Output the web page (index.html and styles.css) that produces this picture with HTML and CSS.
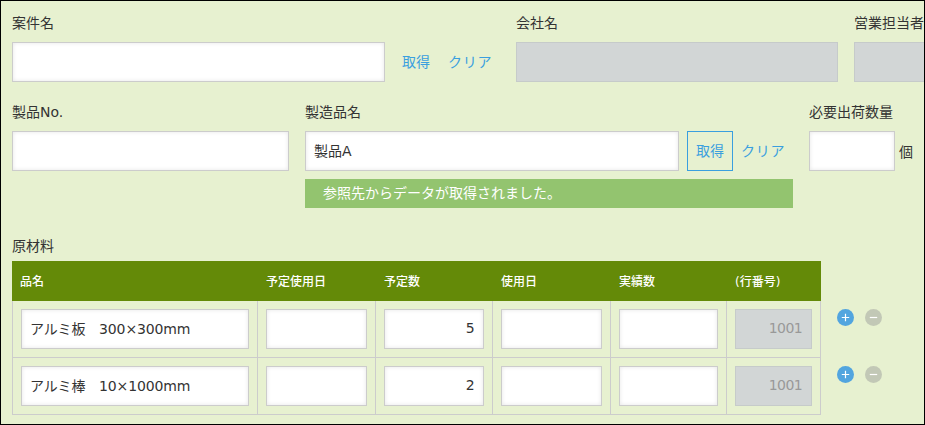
FILE: index.html
```
<!DOCTYPE html>
<html lang="ja">
<head>
<meta charset="utf-8">
<title>製品</title>
<link rel="stylesheet" href="styles.css">
</head>
<body>
<main class="frame">
  <div class="row row-top">
    <div class="field w-373">
      <label class="label">案件名</label>
      <input class="input" type="text">
    </div>
    <div class="links links-top">
      <a class="link get-plain">取得</a>
      <a class="link clear">クリア</a>
    </div>
    <div class="field w-322 after-links">
      <label class="label">会社名</label>
      <input class="input is-off" type="text" disabled>
    </div>
    <div class="field w-322 next-16">
      <label class="label">営業担当者</label>
      <input class="input is-off" type="text" disabled>
    </div>
  </div>

  <div class="row row-second">
    <div class="field w-277">
      <label class="label">製品No.</label>
      <input class="input" type="text">
    </div>
    <div class="product next-16">
      <div class="product-main">
        <div class="field w-374">
          <label class="label">製造品名</label>
          <input class="input" type="text" value="製品A">
        </div>
        <div class="links links-second">
          <a class="link get-boxed">取得</a>
          <a class="link clear">クリア</a>
        </div>
      </div>
      <div class="message">参照先からデータが取得されました。</div>
    </div>
    <div class="field qty">
      <label class="label">必要出荷数量</label>
      <div class="qty-line">
        <input class="input w-86" type="text">
        <span class="unit">個</span>
      </div>
    </div>
  </div>

  <div class="materials">
    <div class="label">原材料</div>
    <div class="table-line">
      <table class="table">
        <thead>
          <tr>
            <th class="c-name">品名</th>
            <th class="c-date">予定使用日</th>
            <th class="c-plan">予定数</th>
            <th class="c-used">使用日</th>
            <th class="c-real">実績数</th>
            <th class="c-line">(行番号)</th>
          </tr>
        </thead>
        <tbody>
          <tr>
            <td><input class="input name" type="text" value="アルミ板　300×300mm"></td>
            <td><input class="input" type="text"></td>
            <td><input class="input num" type="text" value="5"></td>
            <td><input class="input" type="text"></td>
            <td><input class="input" type="text"></td>
            <td><input class="input num is-off" type="text" value="1001" disabled></td>
          </tr>
          <tr>
            <td><input class="input name" type="text" value="アルミ棒　10×1000mm"></td>
            <td><input class="input" type="text"></td>
            <td><input class="input num" type="text" value="2"></td>
            <td><input class="input" type="text"></td>
            <td><input class="input" type="text"></td>
            <td><input class="input num is-off" type="text" value="1001" disabled></td>
          </tr>
        </tbody>
      </table>
      <div class="actions">
        <div class="action-row">
          <svg class="round" viewBox="0 0 17 17"><circle class="add" cx="8.5" cy="8.5" r="8.5"/><path class="sign" d="M8.5 4.8v7.4M4.8 8.5h7.4"/></svg>
          <svg class="round" viewBox="0 0 17 17"><circle class="del" cx="8.5" cy="8.5" r="8.5"/><path class="sign" d="M4.8 8.5h7.4"/></svg>
        </div>
        <div class="action-row">
          <svg class="round" viewBox="0 0 17 17"><circle class="add" cx="8.5" cy="8.5" r="8.5"/><path class="sign" d="M8.5 4.8v7.4M4.8 8.5h7.4"/></svg>
          <svg class="round" viewBox="0 0 17 17"><circle class="del" cx="8.5" cy="8.5" r="8.5"/><path class="sign" d="M4.8 8.5h7.4"/></svg>
        </div>
      </div>
    </div>
  </div>
</main>
</body>
</html>
```
FILE: styles.css
```
* { box-sizing: border-box; }
html, body { margin: 0; padding: 0; }
body {
  width: 925px;
  height: 425px;
  overflow: hidden;
  font-family: "DejaVu Sans", "Noto Sans CJK JP", sans-serif;
  font-size: 14px;
  color: #333;
}
.frame {
  width: 925px;
  height: 425px;
  overflow: hidden;
  border: 1px solid #000;
  background: #e7f1d0;
  padding: 12px 0 0 11px;
}
.row { display: flex; align-items: flex-start; }
.row-top { width: 1200px; }
.row-second { margin-top: 20px; }
.field { display: flex; flex-direction: column; flex: none; }
.label { display: block; height: 20px; line-height: 20px; margin-bottom: 9px; }
.input {
  display: block;
  width: 100%;
  height: 40px;
  margin: 0;
  padding: 0 8px 2px;
  border: 1px solid #ccc;
  border-radius: 0;
  background: #fff;
  box-shadow: inset 0 0 4px rgba(0, 0, 0, .1);
  font: inherit;
  color: #333;
  outline: none;
}
.is-off { background: #d2d6d6; border-color: #c6cbca; box-shadow: none; color: #999; }
.name { letter-spacing: -.15px; }
.num { text-align: right; padding-right: 9px; letter-spacing: -.6px; }
.w-373 { width: 373px; }
.w-322 { width: 322px; }
.w-277 { width: 277px; }
.w-374 { width: 374px; }
.w-86 { width: 86px; flex: none; }
.next-16 { margin-left: 16px; }
.links { display: flex; align-items: center; flex: none; height: 40px; }
.link { color: #3a9fdf; line-height: 20px; }
.clear { letter-spacing: .7px; }
.links-top { margin: 29px 0 0 17px; gap: 18px; }
.after-links { margin-left: 24px; }
.links-second { margin: 29px 0 0 8px; gap: 8px; }
.get-boxed {
  display: flex;
  align-items: center;
  justify-content: center;
  width: 46px;
  height: 40px;
  border: 1px solid #3a9fdf;
}
.product { flex: none; width: 488px; }
.product-main { display: flex; }
.message {
  margin-top: 8px;
  height: 29px;
  line-height: 28px;
  padding-left: 18px;
  background: #93c46f;
  color: #fff;
}
.qty { margin-left: 16px; }
.qty-line { display: flex; align-items: center; gap: 4px; }
.unit { flex: none; }
.materials { padding-top: 28px; }
.materials .label { margin-bottom: 5px; }
.table-line { display: flex; align-items: flex-start; }
.table {
  flex: none;
  table-layout: fixed;
  width: 808px;
  border-collapse: collapse;
}
.table th {
  height: 39px;
  padding: 0 8px 2px;
  border: 1px solid #648a08;
  background: #648a08;
  color: #fff;
  font-size: 12px;
  font-weight: 500;
  text-align: left;
}
.table th.c-name { padding-left: 7px; }
.table td {
  height: 57px;
  padding: 8px;
  border: 1px solid #ccc;
}
.c-name { width: 245px; }
.c-date { width: 118px; }
.c-plan { width: 117px; }
.c-used { width: 118px; }
.c-real { width: 116px; }
.c-line { width: 94px; }
.actions { flex: none; margin-left: 16px; padding-top: 48px; }
.action-row { display: flex; gap: 11px; height: 57px; }
.round { display: block; width: 17px; height: 17px; }
.add { fill: #52a5df; }
.del { fill: #c2c8b6; }
.sign { fill: none; stroke: #fff; stroke-width: 1.2; }
```
